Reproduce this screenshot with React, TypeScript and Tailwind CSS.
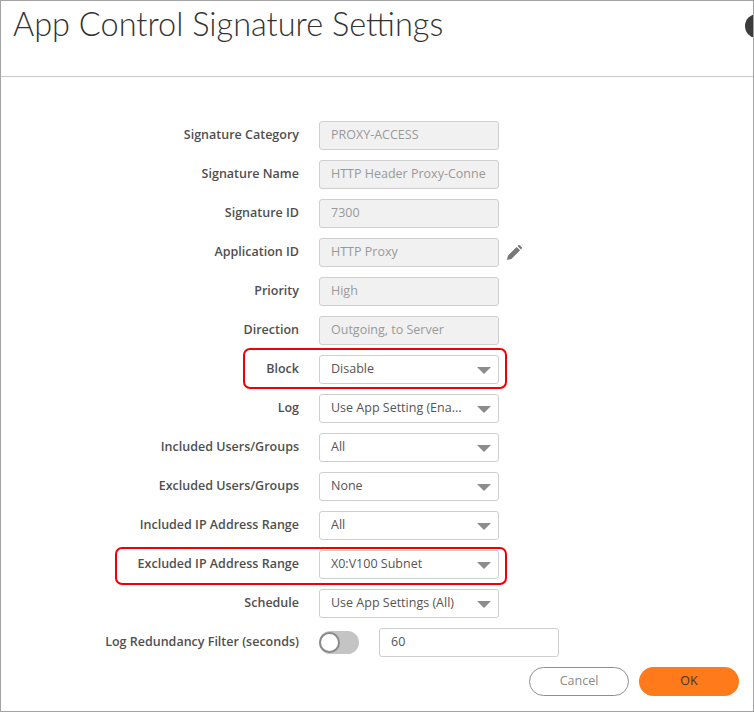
import React from 'react';

const FONT = "font-['Open_Sans','Noto_Sans',sans-serif]";

const Label: React.FC<{ text: string }> = ({ text }) => (
  <div className="mt-[-2px] w-[298px] shrink-0 text-right text-[12.5px] font-semibold leading-[28px] text-[#4f4f4f]">{text}</div>
);

const ReadOnly: React.FC<{ value: string }> = ({ value }) => (
  <div className="flex h-[29px] w-[180px] items-center overflow-hidden whitespace-nowrap rounded-[3px] border border-[#cfcfcf] bg-[#f1f1f1] pl-[11px] text-[12.5px] text-[#999]">
    {value}
  </div>
);

const Select: React.FC<{ value: string }> = ({ value }) => (
  <div className="flex h-[29px] w-[180px] items-center justify-between rounded-[3px] border border-[#cfcfcf] bg-white pl-[11px] pr-[7px] text-[12.5px] text-[#555]">
    <span className="whitespace-nowrap">{value}</span>
    <svg width="14" height="7" viewBox="0 0 14 7" className="mt-[1px] shrink-0">
      <path d="M0 0h14L7 7z" fill="#8c8c8c" />
    </svg>
  </div>
);

const Row: React.FC<{ label: string; children: React.ReactNode }> = ({ label, children }) => (
  <div className="flex h-[29px] items-center gap-[20px]">
    <Label text={label} />
    {children}
  </div>
);

export default function App() {
  return (
    <div className={`${FONT} relative h-[712px] w-[754px] overflow-hidden border border-[#a3a3a3] bg-white`}>
      <header className="h-[76px] border-b border-[#c8c8c8] pl-[12px]">
        <h1 className="font-['Lato',sans-serif] text-[32.5px] font-light leading-[46px] text-[#333]">App Control Signature Settings</h1>
      </header>
      <div className="absolute right-[-16px] top-[13px] h-[24px] w-[24px] rounded-full bg-[#3c3c3c]" />

      <div className="flex flex-col gap-[10px] pt-[44px]">
        <Row label="Signature Category"><ReadOnly value="PROXY-ACCESS" /></Row>
        <Row label="Signature Name"><ReadOnly value="HTTP Header Proxy-Conne" /></Row>
        <Row label="Signature ID"><ReadOnly value="7300" /></Row>
        <Row label="Application ID">
          <ReadOnly value="HTTP Proxy" />
          <svg width="16" height="16" viewBox="0 0 18 18" className="ml-[-13px]">
            <path d="M1 17l1.2-5L12 2.2l3.8 3.8L6 15.8z M13 1.2l1-1a1 1 0 0 1 1.4 0l2.4 2.4a1 1 0 0 1 0 1.4l-1 1z" fill="#777" />
          </svg>
        </Row>
        <Row label="Priority"><ReadOnly value="High" /></Row>
        <Row label="Direction"><ReadOnly value="Outgoing, to Server" /></Row>
        <Row label="Block"><Select value="Disable" /></Row>
        <Row label="Log"><Select value="Use App Setting (Ena..." /></Row>
        <Row label="Included Users/Groups"><Select value="All" /></Row>
        <Row label="Excluded Users/Groups"><Select value="None" /></Row>
        <Row label="Included IP Address Range"><Select value="All" /></Row>
        <Row label="Excluded IP Address Range"><Select value="X0:V100 Subnet" /></Row>
        <Row label="Schedule"><Select value="Use App Settings (All)" /></Row>
        <Row label="Log Redundancy Filter (seconds)">
          <div className="flex h-[23px] w-[40px] items-center rounded-full bg-[#c4c4c4]">
            <div className="h-[21px] w-[21px] rounded-full border-2 border-[#8a8a8a] bg-white" />
          </div>
          <div className="flex h-[29px] w-[180px] items-center rounded-[3px] border border-[#cfcfcf] bg-white pl-[11px] text-[12.5px] text-[#555]">60</div>
        </Row>
      </div>

      <div className="mt-[10px] flex justify-end gap-[10px] pr-[14px]">
        <button className="h-[29px] w-[100px] rounded-full border border-[#8f8f8f] bg-white text-[12.5px] text-[#8a8a8a]">Cancel</button>
        <button className="h-[29px] w-[100px] rounded-full bg-[#ff7a1a] text-[12.5px] text-[#4a3320]">OK</button>
      </div>

      <div className="absolute left-[242px] top-[347px] h-[41px] w-[264px] rounded-[7px] border-2 border-[#f00000]" />
      <div className="absolute left-[114px] top-[546px] h-[38px] w-[392px] rounded-[7px] border-2 border-[#f00000]" />
    </div>
  );
}
